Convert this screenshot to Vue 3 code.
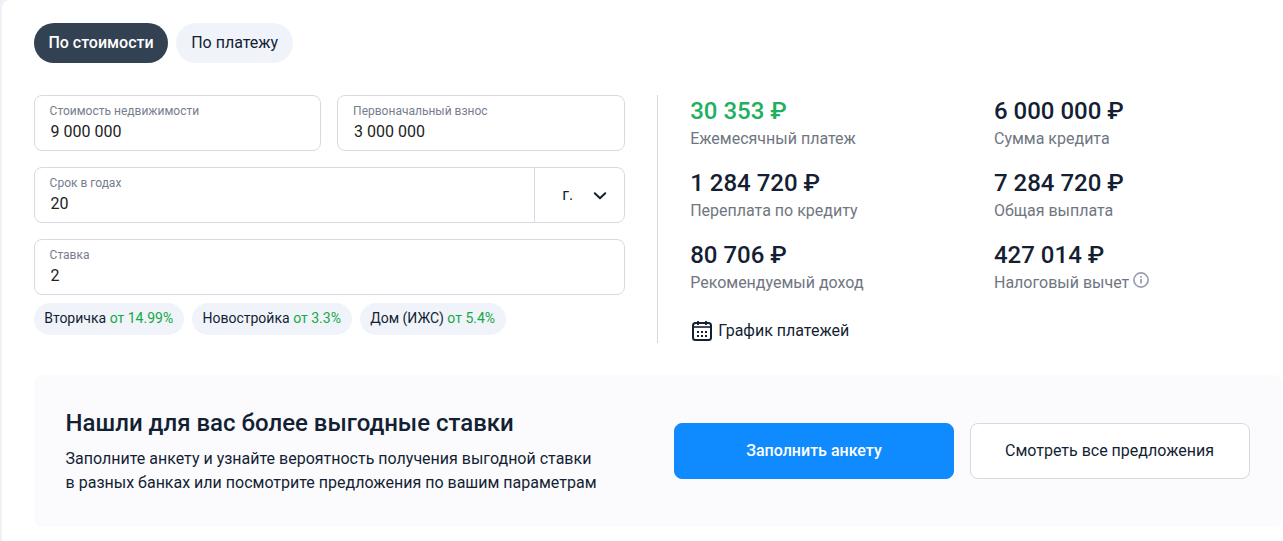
<template>
  <div class="page">
    <div class="card">
      <div class="tabs">
        <button
          v-for="tab in tabs"
          :key="tab.id"
          class="tab"
          :class="{ 'tab--active': tab.id === activeTab }"
          @click="activeTab = tab.id"
        >{{ tab.title }}</button>
      </div>

      <div class="calc">
        <div class="form">
          <div class="form__row">
            <label class="field">
              <span class="field__label">Стоимость недвижимости</span>
              <input v-model="price" class="field__input" type="text" />
            </label>
            <label class="field">
              <span class="field__label">Первоначальный взнос</span>
              <input v-model="deposit" class="field__input" type="text" />
            </label>
          </div>

          <div class="field field--split">
            <label class="field__main">
              <span class="field__label">Срок в годах</span>
              <input v-model="term" class="field__input" type="text" />
            </label>
            <button class="unit">
              <span>г.</span>
              <svg class="unit__arrow" width="14" height="8" viewBox="0 0 14 8" fill="none">
                <path d="M1.8 1.2L7 6.2l5.2-5" stroke="#141f33" stroke-width="2" stroke-linecap="round" stroke-linejoin="round" />
              </svg>
            </button>
          </div>

          <label class="field">
            <span class="field__label">Ставка</span>
            <input v-model="rate" class="field__input" type="text" />
          </label>

          <div class="chips">
            <button v-for="chip in chips" :key="chip.title" class="chip" @click="rate = chip.rate">
              {{ chip.title }} <span class="chip__rate">от {{ chip.rate }}%</span>
            </button>
          </div>
        </div>

        <div class="results">
          <div class="results__grid">
            <div v-for="item in results" :key="item.label" class="result">
              <div class="result__value" :class="{ 'result__value--green': item.green }">{{ item.value }} ₽</div>
              <div class="result__label">
                {{ item.label }}
                <svg v-if="item.hint" class="result__hint" width="16" height="16" viewBox="0 0 16 16" fill="none">
                  <circle cx="8" cy="8" r="7.1" stroke="#9a9fae" stroke-width="1.7" />
                  <path d="M8 7v4.5" stroke="#9a9fae" stroke-width="1.8" />
                  <path d="M8 4v1.8" stroke="#9a9fae" stroke-width="1.8" />
                </svg>
              </div>
            </div>
          </div>

          <a class="schedule">
            <svg class="schedule__icon" width="20" height="20" viewBox="0 0 20 20" fill="none">
              <rect x="1" y="2" width="18" height="17" rx="2.5" stroke="#141f33" stroke-width="2" />
              <path d="M1 6h18" stroke="#141f33" stroke-width="1.6" />
              <path d="M6 0v4M14 0v4" stroke="#141f33" stroke-width="1.8" />
              <path d="M5 11h2m2 0h2m2 0h2M5 15h2m2 0h2m2 0h2" stroke="#141f33" stroke-width="2" />
            </svg>
            <span>График платежей</span>
          </a>
        </div>
      </div>

      <div class="promo">
        <div class="promo__text">
          <h2 class="promo__title">Нашли для вас более выгодные ставки</h2>
          <p class="promo__desc">
            Заполните анкету и узнайте вероятность получения выгодной ставки<br />
            в разных банках или посмотрите предложения по вашим параметрам
          </p>
        </div>
        <div class="promo__actions">
          <button class="btn btn--primary">Заполнить анкету</button>
          <button class="btn">Смотреть все предложения</button>
        </div>
      </div>
    </div>
  </div>
</template>

<script setup>
import { ref } from 'vue'

const tabs = [
  { id: 'price', title: 'По стоимости' },
  { id: 'payment', title: 'По платежу' }
]
const activeTab = ref('price')

const price = ref('9 000 000')
const deposit = ref('3 000 000')
const term = ref('20')
const rate = ref('2')

const chips = [
  { title: 'Вторичка', rate: '14.99' },
  { title: 'Новостройка', rate: '3.3' },
  { title: 'Дом (ИЖС)', rate: '5.4' }
]

const results = [
  { value: '30 353', label: 'Ежемесячный платеж', green: true },
  { value: '6 000 000', label: 'Сумма кредита' },
  { value: '1 284 720', label: 'Переплата по кредиту' },
  { value: '7 284 720', label: 'Общая выплата' },
  { value: '80 706', label: 'Рекомендуемый доход' },
  { value: '427 014', label: 'Налоговый вычет', hint: true }
]
</script>

<style>
body {
  margin: 0;
  overflow: hidden;
}
</style>

<style scoped>
.page {
  box-sizing: border-box;
  height: 100vh;
  padding-left: 2px;
  background: #f0f0f6;
  color: #141f33;
  font-family: Roboto, "Liberation Sans", sans-serif;
  font-size: 16px;
  line-height: 24px;
}

.page * {
  box-sizing: border-box;
}

button,
input {
  margin: 0;
  padding: 0;
  border: 0;
  background: none;
  color: inherit;
  font: inherit;
  letter-spacing: inherit;
}

button {
  cursor: pointer;
}

.card {
  height: 100%;
  padding: 23px 1px 0 31.6px;
  border-top-left-radius: 8px;
  background: #fff;
}

.tabs {
  display: flex;
  gap: 8px;
}

.tab {
  height: 40px;
  padding: 0 14.8px;
  border-radius: 20px;
  background: #f0f4fa;
}

.tab--active {
  background: #334253;
  color: #fff;
  font-weight: 500;
}

.calc {
  display: flex;
  height: 248px;
  margin-top: 32px;
}

.form {
  display: flex;
  flex-direction: column;
  gap: 16px;
  width: 591px;
}

.form__row {
  display: flex;
  gap: 16px;
}

.field {
  display: block;
  flex: 1;
  height: 56px;
  min-height: 56px;
  max-height: 56px;
  padding: 7px 15px;
  border: 1px solid #d8d9e3;
  border-radius: 8px;
}

.field__label {
  display: block;
  color: #767d8e;
  font-size: 12px;
  line-height: 16px;
}

.field__input {
  display: block;
  width: 100%;
  height: 24px;
  margin-top: 1px;
  padding-left: 1px;
  outline: 0;
  color: #222;
}

.field--split {
  display: flex;
  padding: 0;
}

.field__main {
  flex: 1;
  padding: 7px 15px;
}

.unit {
  display: flex;
  align-items: center;
  justify-content: space-between;
  width: 90px;
  padding: 0 17px 0 27.6px;
  border-left: 1px solid #d8d9e3;
}

.unit__arrow {
  margin-top: 2px;
}

.chips {
  display: flex;
  gap: 8px;
  margin-top: -8px;
}

.chip {
  height: 32px;
  padding: 0 10.6px 2px;
  border-radius: 16px;
  background: #f0f4fa;
  font-size: 14px;
  letter-spacing: 0.01px;
  white-space: nowrap;
}

.chip__rate {
  color: #15a843;
}

.results {
  flex: 1;
  margin-left: 32.4px;
  padding-left: 32.2px;
  border-left: 1px solid #d8d9dd;
}

.results__grid {
  display: grid;
  grid-template-columns: 303.8px 1fr;
  row-gap: 16px;
}

.result__value {
  font-size: 24px;
  font-weight: 500;
  line-height: 32px;
}

.result__value--green {
  color: #20b060;
}

.result__label {
  display: flex;
  gap: 4px;
  height: 24px;
  color: #707681;
}

.result__hint {
  margin-top: 1px;
}

.schedule {
  display: flex;
  align-items: center;
  gap: 6.4px;
  margin-top: 24px;
  padding-left: 1.8px;
}

.promo {
  display: flex;
  align-items: center;
  justify-content: space-between;
  height: 152px;
  margin-top: 32px;
  padding: 0 32px;
  border-radius: 8px;
  background: #fbfbfe;
}

.promo__title {
  margin: 0 0 8px;
  font-size: 24px;
  font-weight: 500;
  line-height: 32px;
}

.promo__desc {
  margin: 0;
  white-space: nowrap;
}

.promo__actions {
  display: flex;
  gap: 16px;
}

.btn {
  width: 280px;
  height: 56px;
  padding-right: 1px;
  border: 1px solid #d8d9e0;
  border-radius: 8px;
  background: #fff;
}

.btn--primary {
  padding-right: 0;
  border-color: #108aff;
  background: #108aff;
  color: #fff;
  font-weight: 500;
}
</style>
